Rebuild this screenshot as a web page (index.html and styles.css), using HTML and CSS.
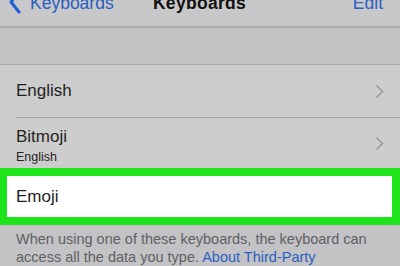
FILE: index.html
```html
<!DOCTYPE html>
<html>
<head>
<meta charset="utf-8">
<link rel="stylesheet" href="styles.css">
</head>
<body>
<div class="nav">
  <div class="nav-inner">
    <div class="back">
      <svg class="back-chev" width="14" height="24" viewBox="0 0 14 24"><path d="M11 1 L3 11 L11 21" fill="none" stroke="#1d5fd0" stroke-width="3" stroke-linecap="round" stroke-linejoin="round"/></svg>
      <span>Keyboards</span>
    </div>
    <div class="title">Keyboards</div>
    <div class="edit">Edit</div>
  </div>
</div>
<div class="band"></div>
<div class="list">
  <div class="row">
    <div class="label">English</div>
    <svg class="chev" width="9" height="15" viewBox="0 0 9 15"><path d="M1.5 1.5 L7.5 7.5 L1.5 13.5" fill="none" stroke="#9b9b9d" stroke-width="1.6"/></svg>
  </div>
  <div class="sep"></div>
  <div class="row">
    <div class="labels">
      <div class="label">Bitmoji</div>
      <div class="sub">English</div>
    </div>
    <svg class="chev" width="9" height="15" viewBox="0 0 9 15"><path d="M1.5 1.5 L7.5 7.5 L1.5 13.5" fill="none" stroke="#9b9b9d" stroke-width="1.6"/></svg>
  </div>
  <div class="highlight">
    <div class="label">Emoji</div>
  </div>
</div>
<div class="footer">When using one of these keyboards, the keyboard can access all the data you type. <span class="link">About Third-Party</span></div>
</body>
</html>
```
FILE: styles.css
```css
html, body {
  margin: 0;
  padding: 0;
}
body {
  width: 400px;
  height: 266px;
  overflow: hidden;
  background: #c3c3c5;
  font-family: "Liberation Sans", Arial, sans-serif;
  color: #1f1f1f;
}
.nav {
  height: 26px;
  background: #c8c8ca;
  border-bottom: 2px solid #adadaf;
  overflow: hidden;
}
.nav-inner {
  display: flex;
  align-items: center;
  justify-content: space-between;
  height: 24px;
  margin-top: -9px;
  padding: 0 17px 0 8px;
  font-size: 17.5px;
}
.back {
  display: flex;
  align-items: center;
  gap: 8px;
  color: #2a5fc0;
  width: 110px;
}
.back-chev {
  display: block;
}
.title {
  font-weight: bold;
  color: #111;
  letter-spacing: 0.3px;
  margin-left: 8px;
}
.edit {
  color: #2a5fc0;
  width: 110px;
  text-align: right;
}
.band {
  height: 36px;
  border-bottom: 1px solid #a9a9ab;
}
.list {
  background: #cdcdcd;
}
.row {
  display: flex;
  align-items: center;
  justify-content: space-between;
  padding: 0 16px 0 16px;
  height: 52px;
}
.row + .sep + .row {
  height: 50px;
}
.sep {
  height: 1px;
  margin-left: 16px;
  background: #a8a8aa;
}
.label {
  font-size: 17px;
  line-height: 20px;
}
.labels .label {
  margin-top: 6px;
}
.sub {
  font-size: 12.5px;
  line-height: 16px;
  margin-top: 2px;
}
.chev {
  display: block;
}
.highlight {
  height: 41px;
  background: #fff;
  border: 8px solid #1ee41c;
  border-left-width: 7px;
  display: flex;
  align-items: center;
  padding-left: 9px;
}
.footer {
  padding: 5px 16px 0 16px;
  font-size: 14.5px;
  line-height: 18px;
  color: #5f5f64;
  background: #c3c3c5;
}
.link {
  color: #2a5fc0;
}
```
